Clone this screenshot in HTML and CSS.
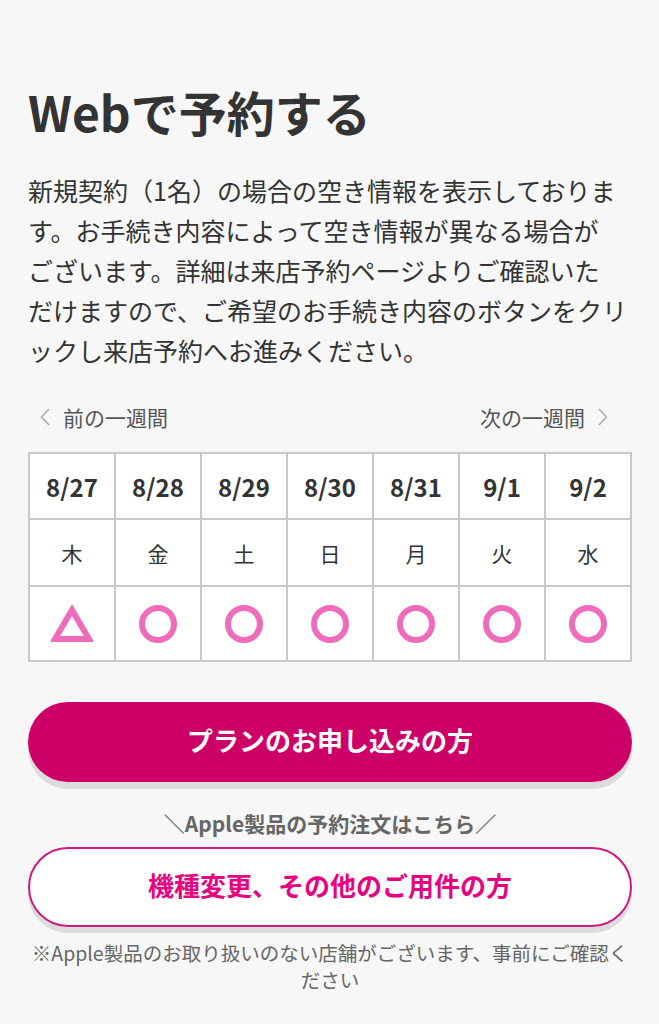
FILE: index.html
```html
<!DOCTYPE html>
<html lang="ja">
<head>
<meta charset="utf-8">
<title>Webで予約する</title>
<link rel="stylesheet" href="styles.css">
</head>
<body>
<main class="page">
  <h1 class="title">Webで予約する</h1>
  <p class="lead">新規契約（1名）の場合の空き情報を表示しておりま<br>す。お手続き内容によって空き情報が異なる場合が<br>ございます。詳細は来店予約ページよりご確認いた<br>だけますので、ご希望のお手続き内容のボタンをクリ<br>ックし来店予約へお進みください。</p>

  <div class="week-nav">
    <a class="week-link prev" href="#">
      <svg class="chev" viewBox="0 0 10 20" width="10" height="20"><polyline points="9,2 1.5,10 9,18" fill="none" stroke="#aaa" stroke-width="1.5"/></svg>
      <span>前の一週間</span>
    </a>
    <a class="week-link next" href="#">
      <span>次の一週間</span>
      <svg class="chev" viewBox="0 0 10 20" width="10" height="20"><polyline points="1,2 8.5,10 1,18" fill="none" stroke="#aaa" stroke-width="1.5"/></svg>
    </a>
  </div>

  <table class="calendar">
    <tr class="dates">
      <td>8/27</td><td>8/28</td><td>8/29</td><td>8/30</td><td>8/31</td><td>9/1</td><td>9/2</td>
    </tr>
    <tr class="days">
      <td>木</td><td>金</td><td>土</td><td>日</td><td>月</td><td>火</td><td>水</td>
    </tr>
    <tr class="status">
      <td><span class="tri"><svg viewBox="0 0 42 38" width="42" height="38"><polygon points="21,5 38,34 4,34" fill="none" stroke="#ef6cbb" stroke-width="6" stroke-linejoin="miter"/></svg></span></td>
      <td><span class="circle"></span></td>
      <td><span class="circle"></span></td>
      <td><span class="circle"></span></td>
      <td><span class="circle"></span></td>
      <td><span class="circle"></span></td>
      <td><span class="circle"></span></td>
    </tr>
  </table>

  <a class="btn btn-primary" href="#">プランのお申し込みの方</a>
  <p class="apple-note">＼Apple製品の予約注文はこちら／</p>
  <a class="btn btn-outline" href="#">機種変更、その他のご用件の方</a>
  <p class="foot-note">※Apple製品のお取り扱いのない店舗がございます、事前にご確認く<br>ださい</p>
</main>
</body>
</html>
```

FILE: styles.css
```css
html, body {
  margin: 0;
  padding: 0;
  background: #f7f7f7;
}
body {
  font-family: "Noto Sans CJK JP", "Noto Sans", sans-serif;
  color: #333;
}
.page {
  padding: 80px 27px 40px 28px;
}
.title {
  margin: 0;
  font-size: 48px;
  line-height: 62px;
  font-weight: 700;
  color: #333;
}
.lead {
  margin: 28px 0 0;
  font-size: 25px;
  line-height: 40px;
  color: #333;
}
.week-nav {
  margin-top: 32px;
  display: flex;
  justify-content: space-between;
  align-items: center;
  padding: 0 24px 0 12px;
  height: 30px;
}
.week-link {
  display: flex;
  align-items: center;
  gap: 13px;
  color: #555;
  text-decoration: none;
  font-size: 21px;
  line-height: 30px;
}
.chev {
  display: block;
}
.calendar {
  margin-top: 20px;
  width: 604px;
  border-collapse: collapse;
  table-layout: fixed;
  background: #fff;
}
.calendar td {
  border: 2px solid #c8c8c8;
  text-align: center;
  padding: 0;
}
.dates td {
  height: 64px;
  font-size: 24px;
  font-weight: 700;
  color: #333;
}
.days td {
  height: 65px;
  font-size: 21px;
  color: #333;
}
.status td {
  height: 73px;
}
.circle {
  display: inline-block;
  width: 26px;
  height: 26px;
  border: 6px solid #ef6cbb;
  border-radius: 50%;
  vertical-align: middle;
}
.tri {
  display: inline-block;
  vertical-align: middle;
}
.tri svg {
  display: block;
}
.btn {
  display: flex;
  align-items: center;
  justify-content: center;
  box-sizing: border-box;
  height: 80px;
  padding-bottom: 6px;
  border-radius: 40px;
  text-decoration: none;
  font-size: 26px;
  font-weight: 700;
}
.btn-primary {
  margin-top: 40px;
  background: #cc0066;
  color: #fff;
  box-shadow: 0 7px 0 #dcdcdc;
}
.btn-outline {
  background: #fff;
  color: #e5037f;
  border: 2px solid #d01a80;
  box-shadow: 0 6px 0 #dcdcdc;
}
.apple-note {
  margin: 26px 0 9px;
  text-align: center;
  font-size: 21px;
  line-height: 30px;
  font-weight: 700;
  color: #666;
}
.foot-note {
  margin: 12px 0 0;
  text-align: center;
  font-size: 19.5px;
  line-height: 27px;
  color: #666;
}
```
